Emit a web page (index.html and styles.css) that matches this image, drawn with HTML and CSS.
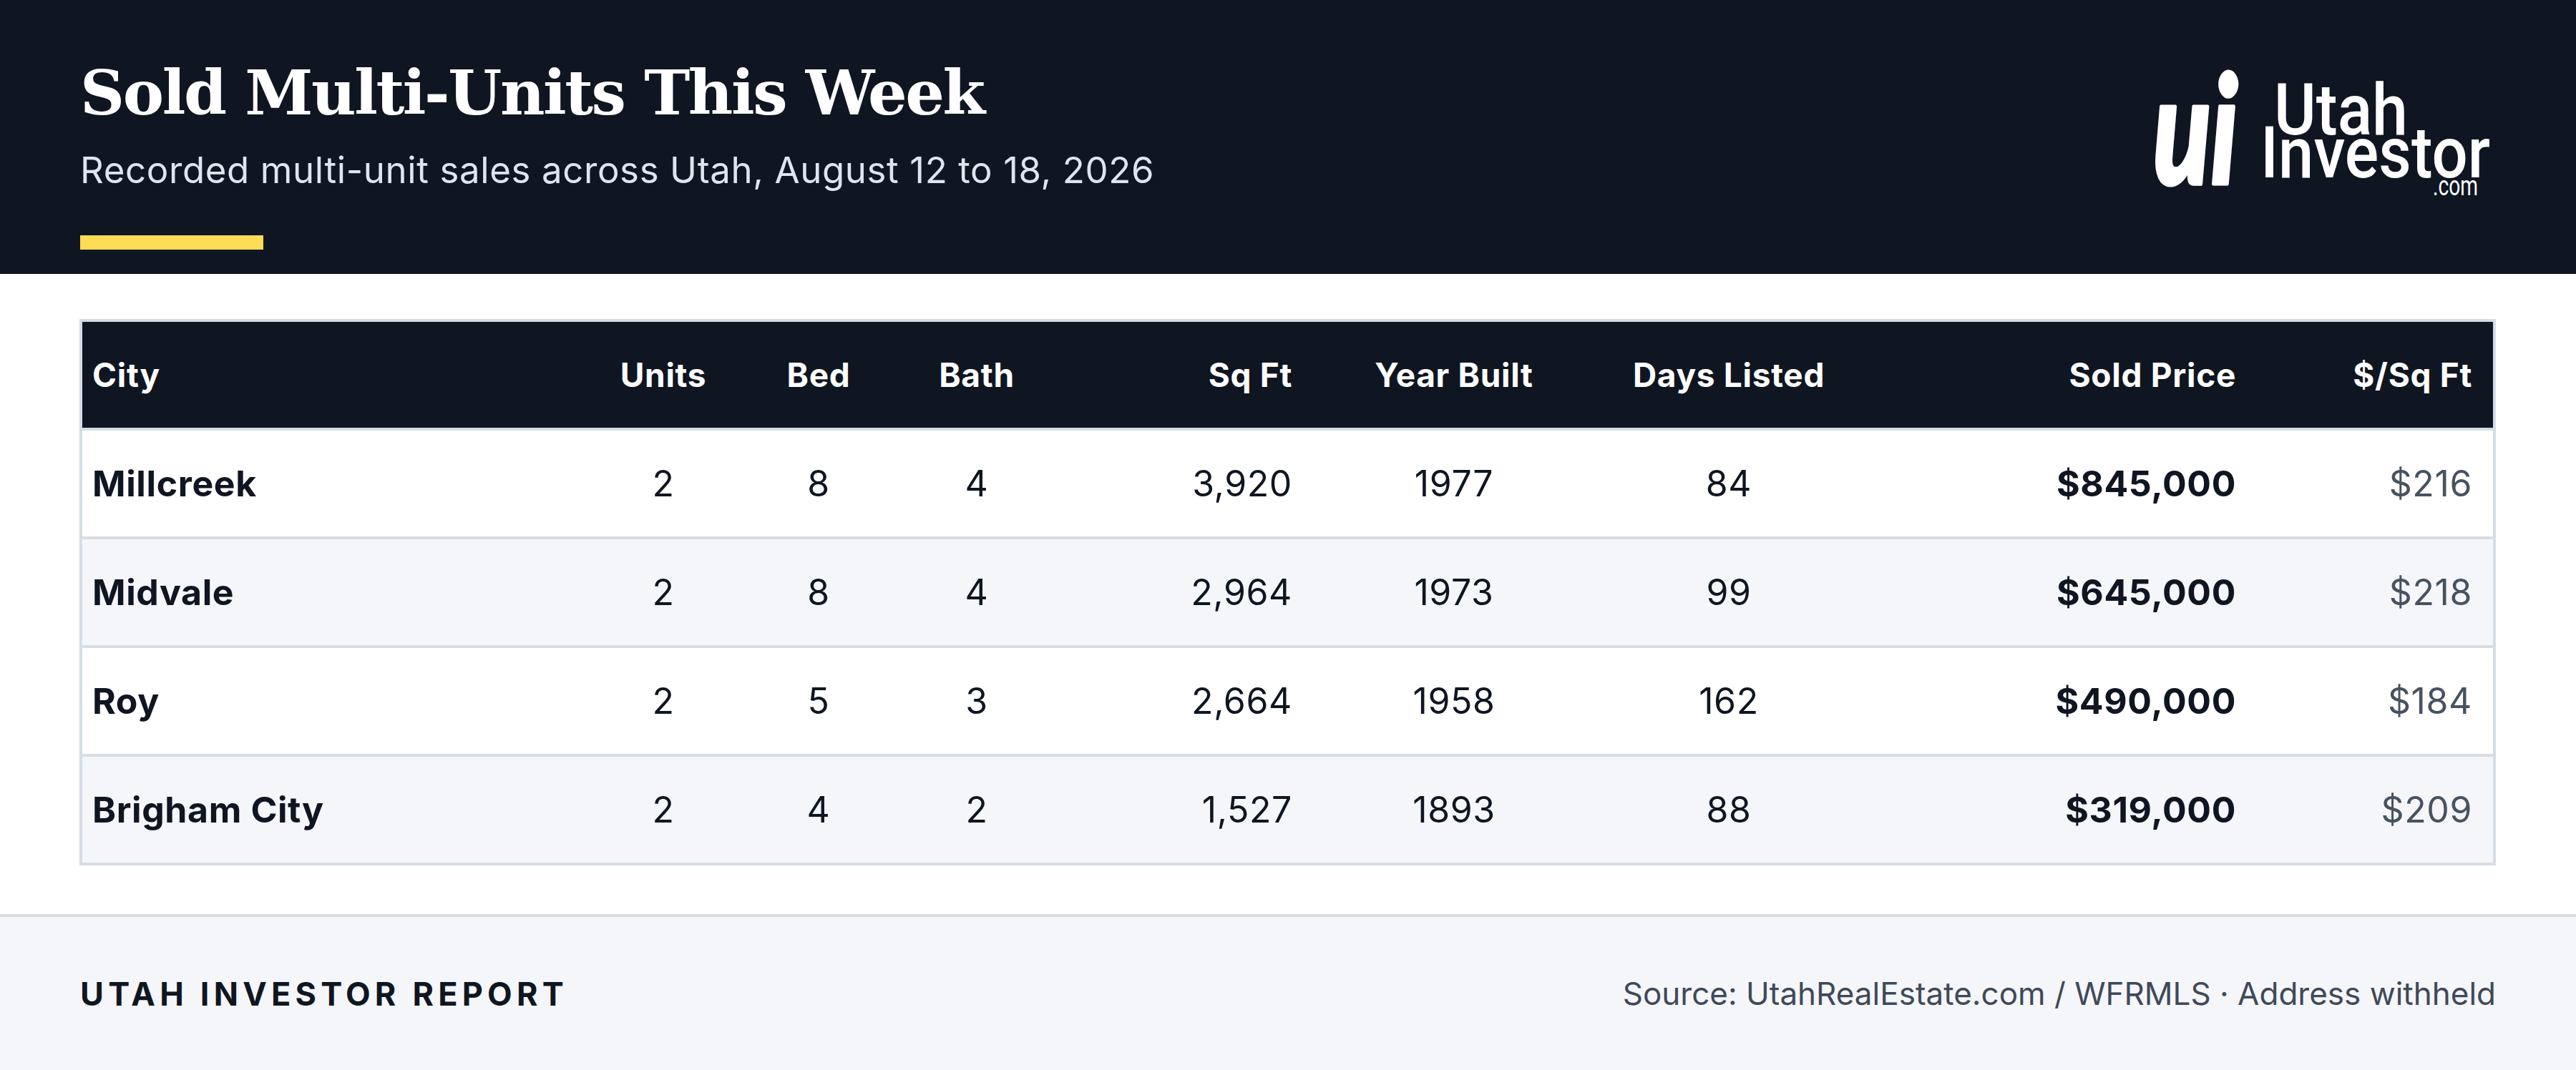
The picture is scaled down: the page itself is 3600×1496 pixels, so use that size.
FILE: index.html
```html
<!DOCTYPE html>
<html lang="en">
<head>
<meta charset="utf-8">
<title>Sold Multi-Units This Week</title>
<link rel="stylesheet" href="styles.css">
</head>
<body>
<header class="hero">
  <div class="hero-text">
    <h1 class="title">Sold Multi-Units This Week</h1>
    <p class="subtitle">Recorded multi-unit sales across Utah, August 12 to 18, 2026</p>
    <div class="accent"></div>
  </div>
  <svg class="logo" width="490" height="180" viewBox="0 0 490 180" aria-label="Utah Investor .com">
    <text class="logo-ui" x="9" y="157" textLength="118" lengthAdjust="spacingAndGlyphs">ui</text>
    <text class="logo-word" x="178" y="88" textLength="187" lengthAdjust="spacingAndGlyphs">Utah</text>
    <text class="logo-word" x="159" y="148" textLength="321" lengthAdjust="spacingAndGlyphs">Investor</text>
    <text class="logo-com" x="400" y="173" textLength="63" lengthAdjust="spacingAndGlyphs">.com</text>
  </svg>
</header>

<main class="content">
  <div class="sales">
    <div class="row head">
      <div class="cell left">City</div>
      <div class="cell center">Units</div>
      <div class="cell center">Bed</div>
      <div class="cell center">Bath</div>
      <div class="cell right">Sq Ft</div>
      <div class="cell center">Year Built</div>
      <div class="cell center">Days Listed</div>
      <div class="cell right">Sold Price</div>
      <div class="cell right last">$/Sq Ft</div>
    </div>
    <div class="row">
      <div class="cell left city">Millcreek</div>
      <div class="cell center">2</div>
      <div class="cell center">8</div>
      <div class="cell center">4</div>
      <div class="cell right">3,920</div>
      <div class="cell center">1977</div>
      <div class="cell center">84</div>
      <div class="cell right price">$845,000</div>
      <div class="cell right last ppsf">$216</div>
    </div>
    <div class="row alt">
      <div class="cell left city">Midvale</div>
      <div class="cell center">2</div>
      <div class="cell center">8</div>
      <div class="cell center">4</div>
      <div class="cell right">2,964</div>
      <div class="cell center">1973</div>
      <div class="cell center">99</div>
      <div class="cell right price">$645,000</div>
      <div class="cell right last ppsf">$218</div>
    </div>
    <div class="row">
      <div class="cell left city">Roy</div>
      <div class="cell center">2</div>
      <div class="cell center">5</div>
      <div class="cell center">3</div>
      <div class="cell right">2,664</div>
      <div class="cell center">1958</div>
      <div class="cell center">162</div>
      <div class="cell right price">$490,000</div>
      <div class="cell right last ppsf">$184</div>
    </div>
    <div class="row alt">
      <div class="cell left city">Brigham City</div>
      <div class="cell center">2</div>
      <div class="cell center">4</div>
      <div class="cell center">2</div>
      <div class="cell right">1,527</div>
      <div class="cell center">1893</div>
      <div class="cell center">88</div>
      <div class="cell right price">$319,000</div>
      <div class="cell right last ppsf">$209</div>
    </div>
  </div>
</main>

<footer class="footer">
  <div class="brand">UTAH INVESTOR REPORT</div>
  <div class="source">Source: UtahRealEstate.com / WFRMLS · Address withheld</div>
</footer>
</body>
</html>
```

FILE: styles.css
```css
* { box-sizing: border-box; }

html, body {
  margin: 0;
  padding: 0;
  background: #ffffff;
}

body {
  width: 3600px;
  height: 1496px;
  font-family: "Inter", "Noto Sans", sans-serif;
  color: #0f1621;
  overflow: hidden;
}

.hero {
  height: 383px;
  background: #0f1621;
  padding: 83px 110px 0 112px;
  display: flex;
  justify-content: space-between;
  align-items: flex-start;
}

.title {
  margin: 0;
  font-family: "DejaVu Serif", "Liberation Serif", serif;
  font-weight: 700;
  font-size: 86px;
  line-height: 1.1;
  letter-spacing: -2.4px;
  color: #ffffff;
}

.subtitle {
  margin: 29px 0 0;
  font-size: 51px;
  line-height: 1.2;
  font-weight: 400;
  letter-spacing: 0.6px;
  color: #dfe5ee;
}

.accent {
  margin-top: 61px;
  width: 256px;
  height: 20px;
  background: #ffdc55;
}

.logo {
  display: block;
  margin-top: 17px;
  fill: #ffffff;
  overflow: visible;
}

.logo-ui {
  font-family: "Lato", "DejaVu Sans", sans-serif;
  font-weight: 900;
  font-style: italic;
  font-size: 210px;
  stroke: #ffffff;
  stroke-width: 5px;
  stroke-linejoin: round;
}

.logo-word {
  font-family: "Roboto", "Liberation Sans", sans-serif;
  font-weight: 500;
  font-size: 101px;
}

.logo-com {
  font-family: "Roboto", "Liberation Sans", sans-serif;
  font-weight: 400;
  font-size: 38px;
}

.content {
  padding: 63px 112px 68px 111px;
}

.sales {
  border: 4px solid #d6dde5;
}

.row {
  display: grid;
  grid-template-columns: 732px 160px 274px 168px 371px 424px 344px 551px 346px;
  height: 152px;
  border-top: 4px solid #d6dde5;
  background: #ffffff;
  font-size: 50px;
  letter-spacing: 0.6px;
  color: #0f1621;
}

.row.alt { background: #f4f6fa; }

.row.head {
  height: 148px;
  border-top: none;
  background: #0f1621;
  color: #ffffff;
  font-size: 46px;
  font-weight: 700;
  letter-spacing: 0.7px;
}

.cell {
  display: flex;
  align-items: center;
  padding: 0 14px;
  white-space: nowrap;
}

.cell.left { justify-content: flex-start; }
.cell.center { justify-content: center; padding: 0; }
.cell.right { justify-content: flex-end; }
.cell.last { padding-right: 30px; }

.city { font-weight: 700; }
.price { font-weight: 700; }
.ppsf { color: #475261; }

.footer {
  height: 218px;
  border-top: 4px solid #d6dde5;
  background: #f4f6fa;
  padding: 0 112px;
  display: flex;
  align-items: center;
  justify-content: space-between;
}

.brand {
  font-size: 45px;
  font-weight: 700;
  letter-spacing: 6.2px;
  color: #0f1621;
}

.source {
  font-size: 44px;
  color: #3f4958;
  letter-spacing: 0px;
}
```
